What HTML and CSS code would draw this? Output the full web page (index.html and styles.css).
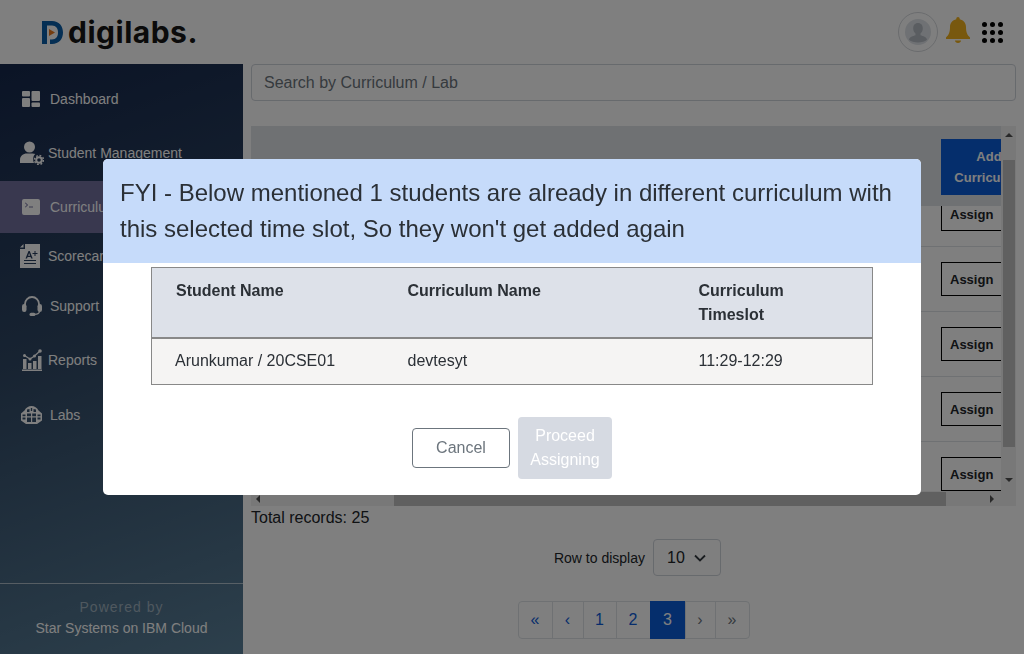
FILE: index.html
```html
<!DOCTYPE html>
<html>
	<head>
		<meta charset="utf-8">
		<title>digilabs</title>
		<link rel="stylesheet" href="styles.css">
	</head>
	<body>
		<header class="topbar">
			<div class="logo">
				<svg class="logo-mark" viewBox="0 0 22 23" width="22" height="23">
					<path d="M0 0h10c7 0 11 5 11 11.500S17 23 10 23H8v-4.500h2c4 0 6-3 6-7s-2-7-6-7H5V23H0z" fill="#0a5ea8"/>
					<path d="M7 8l6 3.500L7 15z" fill="#e8791e"/>
				</svg>
				<span class="logo-text">digilabs.</span>
			</div>
			<div class="top-icons">
				<div class="avatar">
					<svg viewBox="0 0 26 26" width="26" height="26">
						<circle cx="13" cy="13" r="13" fill="#dfe3e8"/>
						<path d="M13 4c-3.200 0-4.800 2.400-4.800 5.400 0 2.100 1 4 2.300 5v1.800c-2.500 1-6.200 1.600-6.500 4.600 2 1.800 5.500 2.700 9 2.700s7-.9 9-2.700c-.3-3-4-3.600-6.500-4.600v-1.800c1.300-1 2.300-2.900 2.300-5C17.800 6.400 16.200 4 13 4z" fill="#b4bac2"/>
					</svg>
				</div>
				<svg class="bell" viewBox="0 0 24 26" width="24" height="26">
					<path d="M12 0c-1 0-1.700.8-1.700 1.700v.6C6.500 3.100 4 6.300 4 10c0 6-1.500 8-4 10.500V22h24v-1.500c-2.500-2.500-4-4.500-4-10.500 0-3.700-2.500-6.900-6.300-7.700v-.6C13.700.8 13 0 12 0zM9 23.500c0 1.500 1.300 2.500 3 2.500s3-1 3-2.500z" fill="#f0b01c"/>
				</svg>
				<div class="dots">
					<i></i><i></i><i></i><i></i><i></i><i></i><i></i><i></i><i></i>
				</div>
			</div>
		</header>

		<div class="layout">
			<aside class="sidebar">
				<nav class="nav">
					<a class="nav-item h-dash">
						<svg viewBox="0 0 18 16" width="18" height="16"><rect width="8" height="5.500" rx="1"/><rect y="7" width="8" height="9" rx="1"/><rect x="9.500" width="8.500" height="10" rx="1"/><rect x="9.500" y="11.500" width="8.500" height="4.500" rx="1"/></svg>
						<span>Dashboard</span>
					</a>
					<a class="nav-item tight h-student">
						<svg viewBox="0 0 24 24" width="24" height="24"><circle cx="9.500" cy="6" r="5.500"/><path d="M0 22v-3c0-4 3-6.500 7-6.500h5.500c1 0 2 .2 2.800.6-2 1.500-2.800 5.400-1.300 8.900z"/><circle cx="19" cy="19" r="2.800" fill="none" stroke="#fff" stroke-width="2"/><circle cx="19" cy="19" r="4.500" fill="none" stroke="#fff" stroke-width="1.500" stroke-dasharray="1.800 1.730"/></svg>
						<span>Student Management</span>
					</a>
					<a class="nav-item active h-curr">
						<svg viewBox="0 0 18 16" width="18" height="16"><path fill-rule="evenodd" d="M2 0h14a2 2 0 0 1 2 2v12a2 2 0 0 1-2 2H2a2 2 0 0 1-2-2V2a2 2 0 0 1 2-2zm1.500 3.500l-.6.600 2 1.900-2 1.900.6.600 2.600-2.500zM7 7.500v1h4v-1z"/></svg>
						<span>Curriculum</span>
					</a>
					<a class="nav-item tight h-score">
						<svg viewBox="0 0 20 24" width="20" height="24"><path fill-rule="evenodd" d="M5 0h15v24H0V5h5zM0 3.500L3.500 0v3.500zM8.500 7l-3 7.500h1.500l.6-1.600h3l.6 1.600h1.500L9.700 7zm.6 2l1 2.700h-2zM14.500 7v2h-2v1h2v2h1v-2h2V9h-2V7zM4 16v1h12v-1zM4 19v1h12v-1z"/></svg>
						<span>Scorecard</span>
					</a>
					<a class="nav-item h-support">
						<svg viewBox="0 0 20 20" width="20" height="20"><path d="M3 10V8a7 7 0 0 1 14 0v2" fill="none" stroke="#fff" stroke-width="1.800"/><rect y="8" width="4.500" height="8" rx="2.200"/><rect x="15.500" y="8" width="4.500" height="8" rx="2.200"/><path d="M17.500 15c0 2.300-2 3.300-5 3.300" fill="none" stroke="#fff" stroke-width="1.200"/><rect x="7.500" y="16.800" width="6" height="3.200" rx="1.600"/></svg>
						<span>Support</span>
					</a>
					<a class="nav-item h-reports">
						<svg viewBox="0 0 20 22" width="20" height="22"><path d="M1 10h3.500v10H1zM6 14h3.500v6H6zM11 12h3.500v8H11zM16 7h3.500v13H16zM0 20.500h20V22H0z"/><path d="M2.500 6.500l5.500 3.500 4.500-3 5.500-5" fill="none" stroke="#fff" stroke-width="1.200"/><circle cx="2.500" cy="6.500" r="1.500"/><circle cx="8" cy="10" r="1.500"/><circle cx="12.500" cy="7" r="1.500"/><circle cx="18" cy="2" r="1.800"/></svg>
						<span>Reports</span>
					</a>
					<a class="nav-item h-labs">
						<svg viewBox="0 0 21 18" width="21" height="18"><path fill-rule="evenodd" d="M10.500 0c3 0 5.500 1.500 7 4.500L21 7.500v7L16 18H5l-5-3.500v-7l3.500-3C5 1.500 7.500 0 10.500 0zM9.800 2v3h1.400V2zM6 3.600V6h2.500V3zM12.500 3v3H15V3.600zM1.500 8.500v1.700h3V8.500zM6 7.500v2.700h4V7.500zM11.200 7.500v2.700h3.800V7.500zM16.500 8.500v1.700h3V8.500zM1.500 11.500v2h3v-2zM6 11.500v4.500h4v-4.500zM11.200 11.500v4.500h3.800v-4.500zM16.500 11.500v2h3v-2z"/></svg>
						<span>Labs</span>
					</a>
				</nav>
				<footer class="powered">
					<p class="powered-by">Powered by</p>
					<p>Star Systems on IBM Cloud</p>
				</footer>
			</aside>

			<main class="main">
				<input class="search" type="text" placeholder="Search by Curriculum / Lab">

				<section class="panel">
					<div class="panel-table">
						<div class="panel-head">
							<button class="add-btn">Add<br>Curriculum</button>
						</div>
						<div class="rows">
							<div class="row"><button class="assign">Assign</button></div>
							<div class="row"><button class="assign">Assign</button></div>
							<div class="row"><button class="assign">Assign</button></div>
							<div class="row"><button class="assign">Assign</button></div>
							<div class="row"><button class="assign">Assign</button></div>
						</div>
					</div>
					<div class="vbar">
						<span class="arrow up"></span>
						<span class="vthumb"></span>
						<span class="arrow down"></span>
					</div>
					<div class="hbar">
						<span class="arrow left"></span>
						<span class="hthumb"></span>
						<span class="arrow right"></span>
					</div>
					<div class="corner"></div>
				</section>

				<p class="total">Total records: 25</p>

				<div class="row-select">
					<span>Row to display</span>
					<div class="select">10
						<svg viewBox="0 0 12 8" width="12" height="8"><path d="M1 1.500l5 5 5-5" fill="none" stroke="#343a40" stroke-width="1.800"/></svg>
					</div>
				</div>

				<ul class="pager">
					<li class="w-34">«</li>
					<li class="w-31">‹</li>
					<li class="w-33">1</li>
					<li class="w-34">2</li>
					<li class="w-35 current">3</li>
					<li class="w-30 off">›</li>
					<li class="w-34 off">»</li>
				</ul>
			</main>
		</div>

		<div class="overlay">
			<div class="modal">
				<div class="modal-head">FYI - Below mentioned 1 students are already in different curriculum with this selected time slot, So they won't get added again</div>
				<table class="modal-table">
					<thead>
						<tr>
							<th class="c1">Student Name</th>
							<th class="c2">Curriculum Name</th>
							<th class="c3">Curriculum Timeslot</th>
						</tr>
					</thead>
					<tbody>
						<tr>
							<td class="first">Arunkumar / 20CSE01</td>
							<td>devtesyt</td>
							<td>11:29-12:29</td>
						</tr>
					</tbody>
				</table>
				<div class="modal-foot">
					<button class="btn-cancel">Cancel</button>
					<button class="btn-proceed">Proceed Assigning</button>
				</div>
			</div>
		</div>
	</body>
</html>
```

FILE: styles.css
```css
* {
	box-sizing: border-box;
}
html, body {
	height: 100%;
}
body {
	margin: 0;
	overflow: hidden;
	background-color: #fff;
	color: #212529;
	font-family: "Liberation Sans", Arial, sans-serif;
	font-size: 16px;
}
p {
	margin: 0;
}

/* top bar */
.topbar {
	display: flex;
	justify-content: space-between;
	align-items: center;
	height: 64px;
	padding: 0 21px 0 42px;
}
.logo {
	display: flex;
	align-items: center;
	gap: 4px;
}
.logo-text {
	font-family: Inter, "Open Sans", sans-serif;
	font-size: 30px;
	font-weight: 700;
	letter-spacing: .5px;
	color: #161616;
	line-height: 36px;
}
.top-icons {
	display: flex;
	align-items: center;
}
.avatar {
	display: flex;
	justify-content: center;
	align-items: center;
	width: 40px;
	height: 40px;
	border: 1px solid #d5d8dc;
	border-radius: 50%;
}
.bell {
	margin: -4px 12px 0 8px;
}
.dots {
	display: grid;
	grid-template-columns: repeat(3, 5px);
	gap: 3px;
}
.dots i {
	width: 5px;
	height: 5px;
	background-color: #000;
	border-radius: 50%;
}

.layout {
	display: flex;
	height: calc(100% - 64px);
}

/* sidebar */
.sidebar {
	display: flex;
	flex-direction: column;
	flex: 0 0 243px;
	background: linear-gradient(160deg, #16284c 0%, #2f4764 45%, #5a8099 100%);
	color: #fff;
	font-size: 14px;
}
.nav {
	flex: 1;
	padding-top: 9px;
}
.nav-item {
	display: flex;
	align-items: center;
	padding-left: 22px;
}
.nav-item.tight {
	padding-left: 20px;
}
.nav-item svg {
	flex: none;
	fill: #fff;
}
.nav-item span {
	white-space: nowrap;
}
.nav-item.active {
	background-color: #72709f;
}
.h-dash { height: 52px; gap: 10px; }
.h-student { height: 56px; gap: 4px; }
.h-curr { height: 52px; gap: 10px; }
.h-score { height: 46px; gap: 8px; }
.h-support { height: 54px; gap: 8px; }
.h-reports { height: 54px; gap: 6px; }
.h-labs { height: 56px; gap: 8px; padding-left: 21px; }

.powered {
	height: 71px;
	padding-top: 13px;
	border-top: 1px solid rgba(255, 255, 255, .55);
	text-align: center;
	font-size: 14px;
	line-height: 21px;
}
.powered-by {
	letter-spacing: 1px;
	color: #9fb0be;
}

/* main column */
.main {
	flex: 1;
	min-width: 0;
	padding: 0 8px;
}
.search {
	display: block;
	width: 100%;
	height: 37px;
	padding: 0 12px;
	border: 1px solid #ced4da;
	border-radius: 4px;
	font: inherit;
}
.search::placeholder {
	color: #6c757d;
}

.panel {
	display: grid;
	grid-template-columns: 1fr 15px;
	grid-template-rows: 365px 15px;
	margin-top: 25px;
}
.panel-table {
	display: flex;
	flex-direction: column;
	min-width: 0;
	overflow: hidden;
}
.panel-head {
	flex: 0 0 80px;
	position: relative;
	z-index: 1;
	padding: 13px 0 0 690px;
	background-color: #dee2e6;
	white-space: nowrap;
}
.add-btn {
	width: 96px;
	height: 56px;
	padding: 0;
	border: none;
	background-color: #0a5cd8;
	color: #fff;
	font: bold 13px/21px "Liberation Sans", Arial, sans-serif;
}
.rows {
	margin-top: -24px;
}
.row {
	display: flex;
	align-items: center;
	height: 65px;
	padding-left: 690px;
	border-bottom: 1px solid #dee2e6;
}
.assign {
	flex: none;
	width: 96px;
	height: 34px;
	padding: 0 0 0 8px;
	border: 1px solid #000;
	background: #fff;
	color: #212529;
	text-align: left;
	font: bold 13px "Liberation Sans", Arial, sans-serif;
}

/* scrollbars */
.vbar, .hbar, .corner {
	background-color: #f1f1f1;
}
.vbar {
	display: flex;
	flex-direction: column;
	align-items: center;
}
.vthumb {
	width: 12px;
	height: 287px;
	margin: 23px 0 31px;
	background-color: #c1c1c1;
}
.hbar {
	display: flex;
	align-items: center;
}
.hthumb {
	width: 552px;
	height: 14px;
	margin: 0 44px 0 134px;
	background-color: #c1c1c1;
}
.arrow {
	flex: none;
	width: 0;
	height: 0;
	border: 4px solid transparent;
}
.arrow.up {
	margin-top: 7px;
	border-top: 0;
	border-bottom-color: #505050;
}
.arrow.down {
	border-bottom: 0;
	border-top-color: #505050;
}
.arrow.left {
	margin-left: 5px;
	border-left: 0;
	border-right-color: #505050;
}
.arrow.right {
	border-right: 0;
	border-left-color: #505050;
}

.total {
	line-height: 24px;
}

.row-select {
	display: flex;
	justify-content: center;
	align-items: center;
	gap: 8px;
	margin: 9px 0 0 8px;
	font-size: 14px;
}
.select {
	display: flex;
	justify-content: space-between;
	align-items: center;
	width: 68px;
	height: 37px;
	padding: 0 14px 0 13px;
	border: 1px solid #ced4da;
	border-radius: 4px;
	font-size: 16px;
}

.pager {
	display: flex;
	justify-content: center;
	margin: 25px 0 0 1px;
	padding: 0;
	list-style: none;
}
.pager li {
	display: flex;
	justify-content: center;
	align-items: center;
	height: 38px;
	border: 1px solid #dee2e6;
	margin-left: -1px;
	color: #0d5bd8;
}
.pager li:first-child {
	border-radius: 4px 0 0 4px;
}
.pager li:last-child {
	border-radius: 0 4px 4px 0;
}
.pager .current {
	background-color: #0a5cd8;
	border-color: #0a5cd8;
	color: #fff;
}
.pager .off {
	color: #6c757d;
}
.w-30 { width: 31px; }
.w-31 { width: 32px; }
.w-33 { width: 34px; }
.w-34 { width: 35px; }
.w-35 { width: 36px; }

/* modal */
.overlay {
	display: flex;
	justify-content: center;
	align-items: center;
	position: fixed;
	top: 0;
	right: 0;
	bottom: 0;
	left: 0;
	z-index: 5;
	background-color: rgba(0, 0, 0, .5);
}
.modal {
	width: 818px;
	height: 336px;
	background-color: #fff;
	border-radius: 5px;
	overflow: hidden;
}
.modal-head {
	padding: 16px 24px 16px 17px;
	background-color: #c6dbfa;
	font-size: 24px;
	line-height: 36px;
	color: #2b3036;
}
.modal-table {
	width: 721px;
	margin: 4px 0 0 48px;
	border-collapse: collapse;
	table-layout: fixed;
	border: 1px solid #888;
	color: #2b3036;
}
.modal-table th {
	height: 70px;
	padding: 11px 24px 0 24px;
	vertical-align: top;
	text-align: left;
	line-height: 24px;
	background-color: #dde1e9;
	border-bottom: 2px solid #888;
}
.modal-table td {
	height: 47px;
	padding: 0 24px 1px;
	background-color: #f5f4f3;
}
.modal-table td.first {
	padding-left: 23px;
}
.modal-table .c1 { width: 232px; }
.modal-table .c2 { width: 291px; }
.modal-table .c3 { width: 198px; }
.modal-foot {
	display: flex;
	justify-content: center;
	align-items: center;
	gap: 8px;
	margin-top: 32px;
}
.btn-cancel, .btn-proceed {
	font: 16px/24px "Liberation Sans", Arial, sans-serif;
	border-radius: 4px;
}
.btn-cancel {
	width: 98px;
	height: 40px;
	background: #fff;
	border: 1px solid #6c757d;
	color: #6c757d;
}
.btn-proceed {
	width: 94px;
	height: 62px;
	padding: 0 8px;
	background-color: #d6dae2;
	border: none;
	color: #fff;
}
```
